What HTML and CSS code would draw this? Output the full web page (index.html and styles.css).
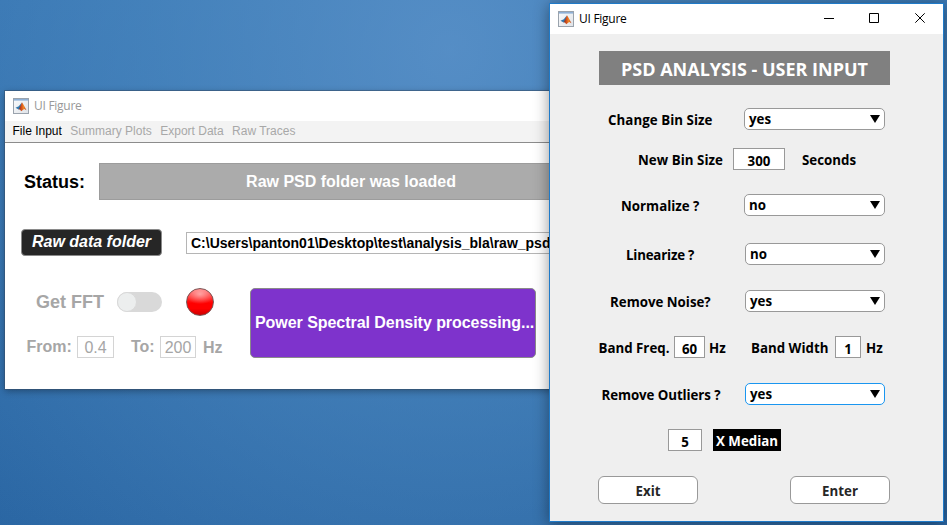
FILE: index.html
```
<!DOCTYPE html>
<html lang="en">
<head>
<meta charset="utf-8">
<title>UI Figure</title>
<link rel="stylesheet" href="styles.css">
</head>
<body>
<svg width="0" height="0" class="defs" aria-hidden="true">
  <defs>
    <linearGradient id="paper" x1="0" y1="0" x2="1" y2="1"><stop offset="0" stop-color="#fafbfc"/><stop offset="1" stop-color="#dfe3e8"/></linearGradient>
    <linearGradient id="peak" x1="0" y1="0" x2="1" y2="0"><stop offset="0" stop-color="#7a2418"/><stop offset=".4" stop-color="#d9541e"/><stop offset=".65" stop-color="#f08a24"/><stop offset="1" stop-color="#b3371a"/></linearGradient>
    <symbol id="matlab" viewBox="0 0 16 16">
      <rect x=".5" y=".5" width="15" height="15" fill="url(#paper)" stroke="#9aa3ad"/>
      <rect x="1" y="1" width="14" height="1.6" fill="#8eb0d6"/>
      <path d="M2.5 9.8 5.8 8.2 8.8 4.5 8.2 9 5.6 11.6Z" fill="#3277ad"/>
      <path d="M5.6 11.6 7.2 8.5 9 4.2 10.4 6.5 13.5 12.3 11.2 10.9 8.2 13.2 7 11.5Z" fill="url(#peak)"/>
    </symbol>
  </defs>
</svg>

<main class="desktop">
  <section class="window main-window">
    <header class="titlebar">
      <svg class="app-icon"><use href="#matlab"/></svg>
      <span class="caption">UI Figure</span>
    </header>
    <nav class="menubar">
      <span class="active">File Input</span><span>Summary Plots</span><span>Export Data</span><span>Raw Traces</span>
    </nav>
    <div class="status-row">
      <span class="status-label">Status:</span>
      <div class="status-box">Raw PSD folder was loaded</div>
    </div>
    <div class="folder-row">
      <button class="folder-button">Raw data folder</button>
      <div class="path">C:\Users\panton01\Desktop\test\analysis_bla\raw_psd</div>
    </div>
    <div class="process-row">
      <div class="fft">
        <div class="fft-switch">
          <span class="fft-label">Get FFT</span>
          <span class="toggle"><i class="knob"></i></span>
          <i class="lamp"></i>
        </div>
        <div class="range">
          <span class="from">From:</span><span class="value low">0.4</span>
          <span class="to">To:</span><span class="value high">200</span>
          <span class="unit">Hz</span>
        </div>
      </div>
      <button class="psd-button"><span>Power Spectral Density processing...</span></button>
    </div>
  </section>

  <section class="window dialog">
    <header class="titlebar">
      <svg class="app-icon"><use href="#matlab"/></svg>
      <span class="caption">UI Figure</span>
      <svg class="controls" viewBox="0 0 104 12" width="104" height="12" fill="none" stroke="#000">
        <path d="M0 5.5H10M45.5 .5H54.5V9.5H45.5ZM91.3 .3 100.7 9.7M100.7 .3 91.3 9.7"/>
      </svg>
    </header>
    <div class="form">
      <h1>PSD ANALYSIS - USER INPUT</h1>
      <div class="row bin-change">
        <label>Change Bin Size</label>
        <div class="select wide">yes<i></i></div>
      </div>
      <div class="row bin-size">
        <label>New Bin Size</label>
        <span class="field">300</span>
        <span>Seconds</span>
      </div>
      <div class="row normalize">
        <label>Normalize ?</label>
        <div class="select wide">no<i></i></div>
      </div>
      <div class="row linearize">
        <label>Linearize ?</label>
        <div class="select">no<i></i></div>
      </div>
      <div class="row noise">
        <label>Remove Noise?</label>
        <div class="select">yes<i></i></div>
      </div>
      <div class="row band">
        <label class="freq">Band Freq.</label>
        <span class="field sixty">60</span>
        <span class="hz">Hz</span>
        <label class="bw">Band Width</label>
        <span class="field one">1</span>
        <span>Hz</span>
      </div>
      <div class="row outliers">
        <label>Remove Outliers ?</label>
        <div class="select focused">yes<i></i></div>
      </div>
      <div class="row median">
        <span class="field">5</span>
        <span class="tag">X Median</span>
      </div>
      <div class="actions">
        <button>Exit</button>
        <button>Enter</button>
      </div>
    </div>
  </section>
</main>
</body>
</html>
```
FILE: styles.css
```
* { box-sizing: border-box; }
body { margin: 0; }
.defs { position: absolute; }
button { margin: 0; padding: 0; }

.desktop {
  position: relative;
  width: 947px;
  height: 525px;
  overflow: hidden;
  background:
    radial-gradient(ellipse 640px 680px at 450px 50px, rgba(98, 152, 206, .72), rgba(82, 142, 197, .55) 45%, rgba(60, 120, 180, 0)),
    linear-gradient(180deg, #3473b0, #2a66a3);
}
.window { position: absolute; background: #fff; white-space: nowrap; }
.titlebar { display: flex; align-items: center; height: 30px; padding-left: 8px; background: #fff; }
.app-icon { width: 16px; height: 16px; }
.caption {
  margin-left: 5px;
  font: 12px/16px "Open Sans", sans-serif;
  letter-spacing: -.27px;
}

/* Main window */
.main-window {
  left: 5px;
  top: 91px;
  width: 620px;
  height: 298px;
  box-shadow: 0 0 0 1px rgba(55, 80, 110, .55), 0 2px 7px rgba(0, 0, 0, .35);
  font-family: "Liberation Sans", sans-serif;
}
.main-window .caption { color: #999; }
.menubar {
  display: flex;
  gap: 8.5px;
  height: 22px;
  padding: 3px 0 0 7.5px;
  background: #f3f3f3;
  border-bottom: 1px solid #8c8c8c;
  font-size: 12px;
  line-height: 14px;
  color: #a8a8a8;
}
.menubar .active { color: #000; }
.status-row { display: flex; align-items: center; height: 37px; margin-top: 20px; padding-left: 19px; }
.status-label { width: 75px; padding-top: 1px; font-size: 18px; font-weight: bold; }
.status-box {
  width: 504px;
  height: 37px;
  background: #ababab;
  border: 1px solid #9c9c9c;
  color: #fff;
  font-size: 16px;
  font-weight: bold;
  line-height: 36px;
  text-align: center;
}
.folder-row { display: flex; align-items: center; height: 27px; margin-top: 29px; padding-left: 16px; }
.folder-button {
  width: 141px;
  height: 27px;
  border: 1px solid #8a8a8a;
  border-radius: 4px;
  background: #262626;
  color: #fff;
  font: italic bold 16px/18px "Liberation Sans", sans-serif;
  padding-bottom: 2px;
}
.path {
  width: 420px;
  height: 22px;
  margin-left: 24px;
  padding-left: 4px;
  border: 1px solid #b5b5b5;
  font-size: 14px;
  font-weight: bold;
  line-height: 21px;
}
.process-row { display: flex; align-items: flex-start; margin-top: 32px; height: 70px; }
.fft { width: 245px; color: #a6a6a6; font-weight: bold; }
.fft-switch { display: flex; align-items: center; height: 28px; padding-left: 31px; }
.fft-label { width: 81px; font-size: 18px; }
.toggle { display: flex; width: 45px; height: 20px; border-radius: 10px; background: #d9d9d9; }
.knob { width: 20px; height: 20px; border: 1px solid #d9d9d9; border-radius: 50%; background: #eceeee; }
.lamp {
  width: 28px;
  height: 28px;
  margin-left: 24px;
  border: 1px solid #7b5555;
  border-radius: 50%;
  background:
    radial-gradient(ellipse 15px 10px at 50% 20%, rgba(255, 255, 255, .5), rgba(255, 255, 255, 0)),
    linear-gradient(#ff6a6a, #f00 55%, #f00 75%, #cc0000);
}
.range { display: flex; align-items: center; height: 22px; margin-top: 20px; padding-left: 21.5px; font-size: 16px; }
.from { width: 50.5px; }
.value { height: 22px; border: 1px solid #d4d4d4; font-weight: normal; line-height: 21px; text-align: center; }
.low { width: 37px; }
.to { width: 29px; margin-left: 17px; }
.high { width: 36px; }
.unit { margin-left: 7px; padding-top: 1px; }
.psd-button {
  width: 286px;
  height: 70px;
  border: 1px solid #8a8a8a;
  border-radius: 5px;
  background: #7e33cc;
  color: #fff;
  font: bold 16px/20px "Liberation Sans", sans-serif;
}
.psd-button span { display: block; margin-left: 4px; letter-spacing: -.05px; text-align: left; }

/* User input dialog */
.dialog {
  left: 549px;
  top: 3px;
  width: 395px;
  height: 519px;
  border: 1px solid #1f7ac8;
  background: #efefef;
  box-shadow: 0 2px 14px rgba(0, 0, 0, .42);
  font: bold 13.3px/18px "Open Sans", sans-serif;
  color: #000;
}
.controls { margin-left: 197px; }
.form { padding-top: 17px; }
h1 {
  width: 291px;
  height: 34px;
  margin: 0 0 0 49px;
  background: #808080;
  color: #fff;
  font: bold 18px/37px "Open Sans", sans-serif;
  text-align: center;
}
.row { display: flex; align-items: center; height: 22px; }
.row > label, .row > span:not(.field):not(.tag) { padding-top: 2px; }
.select {
  display: flex;
  align-items: center;
  justify-content: space-between;
  width: 140px;
  height: 22px;
  padding: 0 4px;
  border: 1px solid #999;
  border-radius: 5px;
  background: #fff;
}
.select.wide { width: 141px; }
.select i { border: 5px solid transparent; border-top: 8px solid #000; border-bottom: 0; }
.select.focused { border-color: #1a96f0; }
.field {
  width: 52px;
  height: 22px;
  border: 1px solid #999;
  background: #fff;
  line-height: 24px;
  text-align: center;
}

.bin-change { margin-top: 23px; padding-left: 58px; }
.bin-change label { width: 136px; letter-spacing: .05px; }
.bin-size { margin-top: 18px; padding-left: 88px; }
.bin-size label { width: 95px; letter-spacing: .05px; }
.bin-size .field { margin-right: 17px; }
.normalize { margin-top: 24px; padding-left: 71px; }
.normalize label { width: 123px; }
.linearize { margin-top: 27px; padding-left: 76px; }
.linearize label { width: 119px; letter-spacing: -.2px; }
.noise { margin-top: 25px; padding-left: 60px; }
.noise label { width: 135px; }
.band { margin-top: 24px; padding-left: 48.5px; }
.freq { width: 75.5px; }
.sixty { width: 31px; }
.hz { width: 42px; margin-left: 4px; }
.bw { width: 84px; }
.one { width: 26px; margin-right: 5px; }
.outliers { margin-top: 25px; padding-left: 51.5px; }
.outliers label { width: 143.5px; letter-spacing: -.08px; }
.median { margin-top: 24px; padding-left: 118px; }
.median .field { width: 34px; margin-right: 11px; }
.tag { width: 68px; height: 22px; background: #000; color: #fff; line-height: 24px; text-align: center; }
.actions { display: flex; gap: 92px; margin-top: 25px; padding-left: 48px; }
.actions button {
  width: 100px;
  height: 28px;
  padding-top: 2px;
  border: 1px solid #999;
  border-radius: 6px;
  background: #fff;
  color: #262626;
  font: inherit;
}
```
